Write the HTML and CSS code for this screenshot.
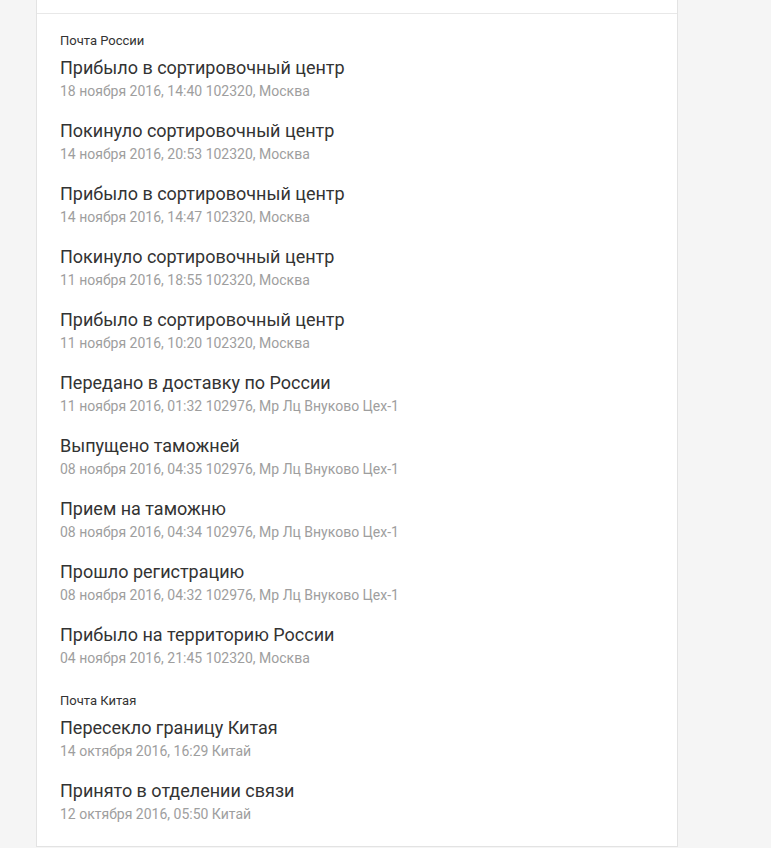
FILE: index.html
```html
<!DOCTYPE html>
<html lang="ru">
<head>
  <meta charset="UTF-8" />
  <meta name="viewport" content="width=device-width, initial-scale=1.0"/>
  <title>Отслеживание посылки</title>
  <link rel="stylesheet" href="styles.css">
</head>
<body>
  <div class="card">
    <div class="card-top"></div>

    <!-- Почта России -->
    <div class="section">
      <div class="section-title">Почта России</div>
      <div class="event">
        <div class="event-name">Прибыло в сортировочный центр</div>
        <div class="event-info">18 ноября 2016, 14:40 102320, Москва</div>
      </div>
      <div class="event">
        <div class="event-name">Покинуло сортировочный центр</div>
        <div class="event-info">14 ноября 2016, 20:53 102320, Москва</div>
      </div>
      <div class="event">
        <div class="event-name">Прибыло в сортировочный центр</div>
        <div class="event-info">14 ноября 2016, 14:47 102320, Москва</div>
      </div>
      <div class="event">
        <div class="event-name">Покинуло сортировочный центр</div>
        <div class="event-info">11 ноября 2016, 18:55 102320, Москва</div>
      </div>
      <div class="event">
        <div class="event-name">Прибыло в сортировочный центр</div>
        <div class="event-info">11 ноября 2016, 10:20 102320, Москва</div>
      </div>
      <div class="event">
        <div class="event-name">Передано в доставку по России</div>
        <div class="event-info">11 ноября 2016, 01:32 102976, Мр Лц Внуково Цех-1</div>
      </div>
      <div class="event">
        <div class="event-name">Выпущено таможней</div>
        <div class="event-info">08 ноября 2016, 04:35 102976, Мр Лц Внуково Цех-1</div>
      </div>
      <div class="event">
        <div class="event-name">Прием на таможню</div>
        <div class="event-info">08 ноября 2016, 04:34 102976, Мр Лц Внуково Цех-1</div>
      </div>
      <div class="event">
        <div class="event-name">Прошло регистрацию</div>
        <div class="event-info">08 ноября 2016, 04:32 102976, Мр Лц Внуково Цех-1</div>
      </div>
      <div class="event">
        <div class="event-name">Прибыло на территорию России</div>
        <div class="event-info">04 ноября 2016, 21:45 102320, Москва</div>
      </div>
    </div>

    <!-- Почта Китая -->
    <div class="section">
      <div class="section-title">Почта Китая</div>
      <div class="event">
        <div class="event-name">Пересекло границу Китая</div>
        <div class="event-info">14 октября 2016, 16:29 Китай</div>
      </div>
      <div class="event">
        <div class="event-name">Принято в отделении связи</div>
        <div class="event-info">12 октября 2016, 05:50 Китай</div>
      </div>
    </div>
  </div>
</body>
</html>
```

FILE: styles.css
```css
html, body {
  margin: 0;
  padding: 0;
  background: #f5f5f5;
  font-family: Roboto, 'Liberation Sans', sans-serif;
  color: #333;
}

.card {
  width: 640px;
  margin-left: 36px;
  background: #fff;
  border: 1px solid #e3e3e3;
  border-top: none;
}

.card-top {
  height: 13px;
  border-bottom: 1px solid #e8e8e8;
}

.section {
  padding: 19px 23px 0;
}

.section + .section {
  padding-top: 7px;
}

.section:last-child {
  padding-bottom: 4px;
}

.section-title {
  font-size: 13px;
  line-height: 16px;
  margin-bottom: 7px;
}

.event {
  margin-bottom: 18px;
}

.event-name {
  font-size: 18px;
  line-height: 23px;
  margin-bottom: 2px;
  color: #333;
}

.event-info {
  font-size: 14px;
  line-height: 20px;
  color: #9e9e9e;
}
```
